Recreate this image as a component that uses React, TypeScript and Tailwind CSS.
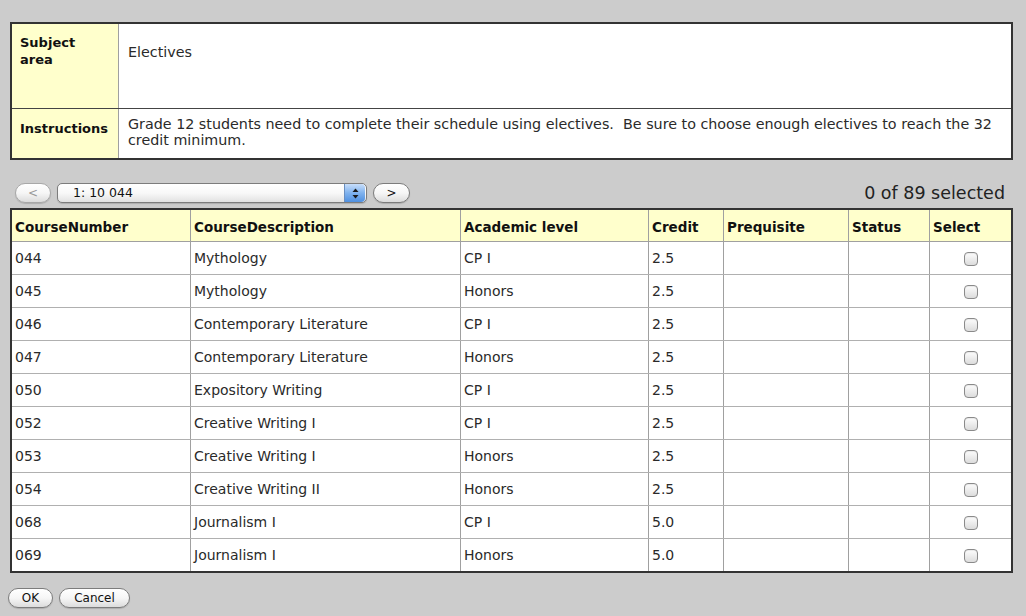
import React from 'react';

interface Course {
  number: string;
  description: string;
  level: string;
  credit: string;
}

const courses: Course[] = [
  { number: '044', description: 'Mythology', level: 'CP I', credit: '2.5' },
  { number: '045', description: 'Mythology', level: 'Honors', credit: '2.5' },
  { number: '046', description: 'Contemporary Literature', level: 'CP I', credit: '2.5' },
  { number: '047', description: 'Contemporary Literature', level: 'Honors', credit: '2.5' },
  { number: '050', description: 'Expository Writing', level: 'CP I', credit: '2.5' },
  { number: '052', description: 'Creative Writing I', level: 'CP I', credit: '2.5' },
  { number: '053', description: 'Creative Writing I', level: 'Honors', credit: '2.5' },
  { number: '054', description: 'Creative Writing II', level: 'Honors', credit: '2.5' },
  { number: '068', description: 'Journalism I', level: 'CP I', credit: '5.0' },
  { number: '069', description: 'Journalism I', level: 'Honors', credit: '5.0' },
];

const headers = ['CourseNumber', 'CourseDescription', 'Academic level', 'Credit', 'Prequisite', 'Status', 'Select'];

const gridCols = 'grid grid-cols-[178px_270px_188px_75px_125px_81px_82px]';

// Aqua-style pill button
const PillButton: React.FC<{ children: React.ReactNode; className?: string; disabled?: boolean }> = ({ children, className, disabled }) => (
  <button
    className={`h-[20px] rounded-full border bg-gradient-to-b from-white via-[#f6f6f6] to-[#dcdcdc] text-[12px] leading-none flex items-center justify-center shadow-[0_1px_1px_rgba(0,0,0,0.15)] ${
      disabled ? 'border-[#a8a8a8] text-[#9a9a9a]' : 'border-[#7c7c7c] text-[#111]'
    } ${className ?? ''}`}
  >
    {children}
  </button>
);

const Checkbox: React.FC = () => (
  <span className="block w-[14px] h-[14px] rounded-[4px] border border-[#8a8a8a] bg-gradient-to-b from-[#fdfdfd] to-[#dcdcdc] shadow-[inset_0_1px_1px_rgba(0,0,0,0.08)]" />
);

export default function App() {
  return (
    <div className="w-full h-[616px] bg-[#cccccc] pt-[22px] pl-[10px] font-['DejaVu_Sans',sans-serif] text-[#2a2a2a] overflow-hidden">
      {/* Info panel */}
      <div className="w-[1003px] border-2 border-[#333] bg-white">
        <div className="grid grid-cols-[106px_1fr] h-[85px] border-b border-[#444]">
          <div className="bg-[#ffffcc] pl-[8px] pt-[10px] text-[13px] leading-[17px] font-bold text-[#111]">
            Subject
            <br />
            area
          </div>
          <div className="border-l border-[#a0a0a0] pl-[9px] pt-[20px] text-[14.3px] leading-[16px]">Electives</div>
        </div>
        <div className="grid grid-cols-[106px_1fr] h-[49px]">
          <div className="bg-[#ffffcc] pl-[8px] pt-[11px] text-[13px] leading-[17px] font-bold text-[#111]">Instructions</div>
          <div className="border-l border-[#a0a0a0] pl-[9px] pt-[7px] text-[14.3px] leading-[16px] whitespace-nowrap">
            Grade 12 students need to complete their schedule using electives.&nbsp; Be sure to choose enough electives to reach the 32
            <br />
            credit minimum.
          </div>
        </div>
      </div>

      {/* Paging controls */}
      <div className="w-[1003px] mt-[23px] h-[20px] flex items-center pl-[5px] pr-[8px]">
        <PillButton disabled className="w-[36px]">&lt;</PillButton>
        <div className="ml-[6px] w-[310px] h-[20px] rounded-[5px] border border-[#7c7c7c] bg-gradient-to-b from-white via-[#f8f8f8] to-[#e2e2e2] flex items-center shadow-[0_1px_1px_rgba(0,0,0,0.15)] overflow-hidden">
          <span className="pl-[15px] text-[12.5px] text-[#111] flex-1">1: 10 044</span>
          <span className="w-[21px] h-full mr-[1px] rounded-r-[4px] bg-gradient-to-b from-[#c8defa] via-[#7fb2ee] to-[#4f90e0] border-l border-[#6a8fc0] flex items-center justify-center">
            <svg width="7" height="11" viewBox="0 0 7 11">
              <path d="M3.5 0.5 L6.5 4 L0.5 4 Z" fill="#1a1a1a" />
              <path d="M3.5 10.5 L6.5 7 L0.5 7 Z" fill="#1a1a1a" />
            </svg>
          </span>
        </div>
        <PillButton className="ml-[6px] w-[37px]">&gt;</PillButton>
        <span className="ml-auto text-[17.5px] text-[#222]">0 of 89 selected</span>
      </div>

      {/* Course table */}
      <div className="w-[1003px] mt-[5px] border-2 border-[#333] bg-white">
        <div className={`${gridCols} h-[32px] border-b border-[#a0a0a0] bg-[#ffffcc]`}>
          {headers.map((h, i) => (
            <div
              key={h}
              className={`flex items-center pl-[3px] pt-[3px] text-[13.5px] font-bold text-[#111] ${i > 0 ? 'border-l border-[#a0a0a0]' : ''}`}
            >
              {h}
            </div>
          ))}
        </div>
        {courses.map((c, idx) => (
          <div
            key={c.number}
            className={`${gridCols} ${idx < courses.length - 1 ? 'h-[33px] border-b border-[#b0b0b0]' : 'h-[32px]'}`}
          >
            <div className="flex items-center pl-[3px] text-[14px]">{c.number}</div>
            <div className="flex items-center pl-[3px] text-[14px] border-l border-[#a0a0a0]">{c.description}</div>
            <div className="flex items-center pl-[3px] text-[14px] border-l border-[#a0a0a0]">{c.level}</div>
            <div className="flex items-center pl-[3px] text-[14px] border-l border-[#a0a0a0]">{c.credit}</div>
            <div className="border-l border-[#a0a0a0]" />
            <div className="border-l border-[#a0a0a0]" />
            <div className="flex items-center justify-center border-l border-[#a0a0a0] pt-[1px]">
              <Checkbox />
            </div>
          </div>
        ))}
      </div>

      {/* Dialog buttons */}
      <div className="mt-[15px] -ml-[2px] flex items-center gap-[6px]">
        <PillButton className="w-[45px]">OK</PillButton>
        <PillButton className="w-[71px]">Cancel</PillButton>
      </div>
    </div>
  );
}
